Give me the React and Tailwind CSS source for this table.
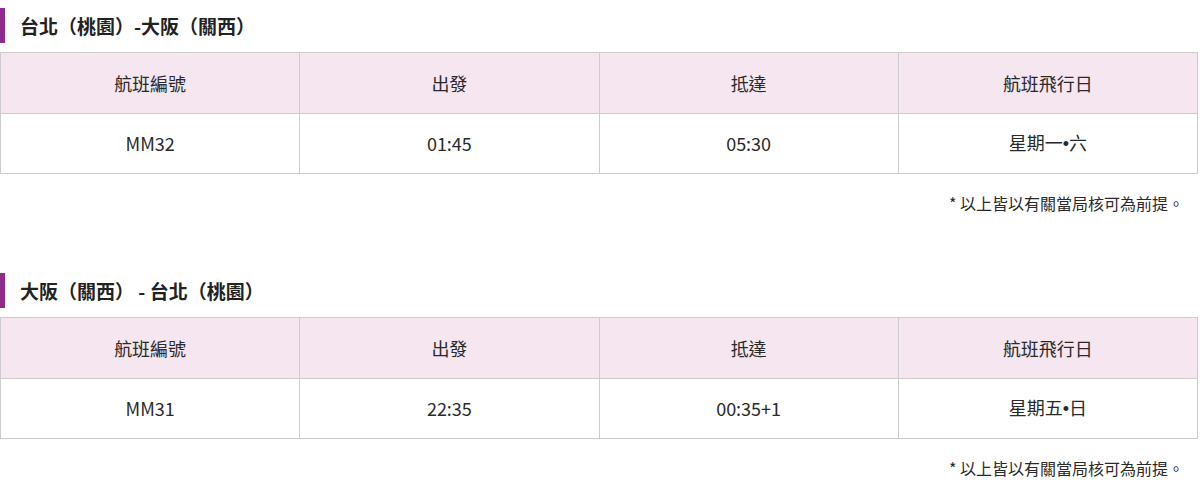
const sections = [
  {
    title: '台北（桃園）-大阪（關西）',
    flight: ['MM32', '01:45', '05:30', ['星期一', '六']],
  },
  {
    title: '大阪（關西） - 台北（桃園）',
    flight: ['MM31', '22:35', '00:35+1', ['星期五', '日']],
  },
]

const headers = ['航班編號', '出發', '抵達', '航班飛行日']

const font = { fontFamily: '"Noto Sans CJK TC", "Noto Sans", sans-serif' }

const Days = ({ parts }) => (
  <>
    {parts[0]}
    <span className="font-['Liberation_Sans',sans-serif]">•</span>
    {parts[1]}
  </>
)

const Section = ({ title, flight }) => (
  <div>
    <div className="flex items-center h-[35px] border-l-[5px] border-[#8e2a8b] pl-[15px]">
      <h2 className="text-[19px] font-bold text-[#222] leading-none">{title}</h2>
    </div>
    <table className="mt-[9px] w-[1198px] border-collapse table-fixed text-[18px] text-[#2a2a2a]">
      <thead>
        <tr className="bg-[#f5e6f0]">
          {headers.map((h) => (
            <th key={h} className="h-[61px] border border-[#cccccc] font-normal text-center">
              {h}
            </th>
          ))}
        </tr>
      </thead>
      <tbody>
        <tr>
          {flight.map((v, i) => (
            <td key={i} className="h-[60px] border border-[#cccccc] text-center">
              {Array.isArray(v) ? <Days parts={v} /> : v}
            </td>
          ))}
        </tr>
      </tbody>
    </table>
    <p className="text-right pr-[16px] mt-[17px] text-[16px] text-[#2a2a2a]">* 以上皆以有關當局核可為前提。</p>
  </div>
)

const App = () => (
  <div className="bg-white w-[1200px] h-[481px] overflow-hidden pt-[8px]" style={font}>
    <div className="flex flex-col gap-[58px]">
      {sections.map((s) => (
        <Section key={s.title} {...s} />
      ))}
    </div>
  </div>
)

export default App
